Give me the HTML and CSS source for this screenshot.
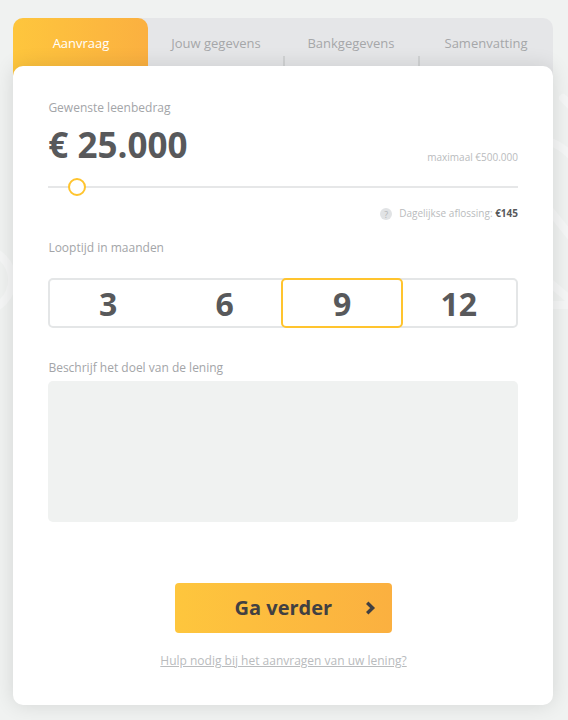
FILE: index.html
```html
<!DOCTYPE html>
<html lang="nl">
<head>
<meta charset="utf-8">
<title>Lening aanvragen</title>
<link rel="stylesheet" href="styles.css">
</head>
<body>
<svg class="backdrop" viewBox="0 0 568 720" aria-hidden="true">
  <circle cx="-19" cy="280" r="31"/>
  <path d="M563 98l12 12M548 141q14 4 28 20M548 208l28 35M548 281l28 24H548"/>
</svg>
<main class="wizard">
  <nav class="tabs">
    <a class="tab active">Aanvraag</a>
    <a class="tab divided">Jouw gegevens</a>
    <a class="tab divided">Bankgegevens</a>
    <a class="tab">Samenvatting</a>
  </nav>
  <form class="card">
    <div class="label">Gewenste leenbedrag</div>
    <div class="amount-row">
      <strong class="amount">€ 25.000</strong>
      <span class="small">maximaal €500.000</span>
    </div>
    <div class="slider"><span class="thumb"></span></div>
    <div class="daily small"><span class="help">?</span><span>Dagelijkse aflossing: <b>€145</b></span></div>
    <div class="label">Looptijd in maanden</div>
    <div class="terms">
      <div class="term">3</div>
      <div class="term">6</div>
      <div class="term selected">9</div>
      <div class="term last">12</div>
    </div>
    <div class="label">Beschrijf het doel van de lening</div>
    <div class="purpose"></div>
    <button class="next" type="button">
      <span>Ga verder</span>
      <svg class="chevron" width="11" height="14" viewBox="0 0 11 14"><path d="M2.2 1.8L7.6 7L2.2 12.2"/></svg>
    </button>
    <a class="help-link">Hulp nodig bij het aanvragen van uw lening?</a>
  </form>
</main>
</body>
</html>
```

FILE: styles.css
```css
* { box-sizing: border-box; }
body {
  margin: 0;
  height: 720px;
  overflow: hidden;
  background: #f0f2f1;
  font-family: "Open Sans", sans-serif;
  color: #58595b;
}
.backdrop {
  position: absolute;
  inset: 0;
  width: 568px;
  height: 720px;
  fill: none;
  stroke: #f5f6f6;
  stroke-width: 8;
  stroke-linecap: round;
}
.wizard {
  position: relative;
  width: 540px;
  margin: 18px 0 0 13px;
}
.tabs {
  display: flex;
  height: 60px;
  border-radius: 10px 10px 0 0;
  background: #e5e6e8;
}
.tab {
  flex: 0 0 135px;
  padding: 15px 0 0 1px;
  font-size: 13px;
  line-height: 20px;
  text-align: center;
  color: #a5a7a9;
}
.tab.active {
  color: #fff;
  border-radius: 10px 10px 0 0;
  background: linear-gradient(90deg, #fec63d, #fbb040);
}
.tab.divided {
  flex-basis: 137px;
  margin-right: -2px;
  padding-right: 2px;
  background: linear-gradient(#d1d3d4, #d1d3d4) 135px 38px / 2px 10px no-repeat;
}
.card {
  position: relative;
  display: flex;
  flex-direction: column;
  height: 639px;
  margin-top: -12px;
  padding: 32px 35px 0;
  border-radius: 10px;
  background: #fff;
  box-shadow: 0 0 20px rgba(0, 0, 0, .12);
}
.label {
  font-size: 12px;
  line-height: 20px;
  padding-left: .4px;
  color: #a3a5a8;
}
.amount-row {
  display: flex;
  justify-content: space-between;
  align-items: flex-end;
  height: 54px;
}
.amount {
  font-size: 35px;
  line-height: 54px;
  padding-left: .3px;
}
.small {
  font-size: 10px;
  line-height: 20px;
  color: #b9bbbd;
}
.amount-row .small { margin-bottom: 5px; }
.slider {
  display: flex;
  height: 2px;
  margin-top: 14px;
  background: #e6e7e8;
}
.thumb {
  flex: none;
  width: 18px;
  height: 18px;
  margin-left: 20px;
  transform: translateY(-8px);
  border: 2px solid #ffc42e;
  border-radius: 50%;
  background: #fff;
}
.daily {
  display: flex;
  justify-content: flex-end;
  align-items: center;
  gap: 7px;
  height: 20px;
  margin: 16px 0 14px;
}
.daily span:last-child {
  margin-top: -2px;
}
.daily b { color: #58595b; }
.help {
  width: 12px;
  height: 12px;
  border-radius: 50%;
  background: #e1e3e5;
  color: #b5b7b9;
  font-size: 9px;
  line-height: 13px;
  text-align: center;
}
.terms {
  display: grid;
  grid-template-columns: repeat(4, 1fr);
  height: 50px;
  margin: 20px 0 30px;
  border: 2px solid #e4e6e7;
  border-radius: 5px;
}
.term {
  font-size: 32px;
  line-height: 48px;
  font-weight: 700;
  text-align: center;
}
.term.last { padding-left: 2px; }
.term.selected {
  height: 50px;
  margin: -2px -3px -2px -2px;
  padding-left: 1px;
  border: 2px solid #ffc42e;
  border-radius: 5px;
  background: #fff;
}
.purpose {
  height: 141px;
  margin-top: 3px;
  border-radius: 5px;
  background: #f0f2f1;
}
.next {
  display: flex;
  align-items: center;
  justify-content: space-between;
  align-self: center;
  width: 217px;
  height: 50px;
  margin-top: 61px;
  padding: 0 16px 0 60px;
  border: 0;
  border-radius: 4px;
  background: linear-gradient(90deg, #fec63d, #fbb040);
  color: #414042;
  font: 700 20px/50px "Open Sans", sans-serif;
}
.chevron {
  fill: none;
  stroke: #414042;
  stroke-width: 3.4;
}
.help-link {
  align-self: center;
  margin-top: 18px;
  padding-left: 1px;
  font-size: 12px;
  line-height: 20px;
  color: #b9bbbd;
  text-decoration: underline;
}
```
